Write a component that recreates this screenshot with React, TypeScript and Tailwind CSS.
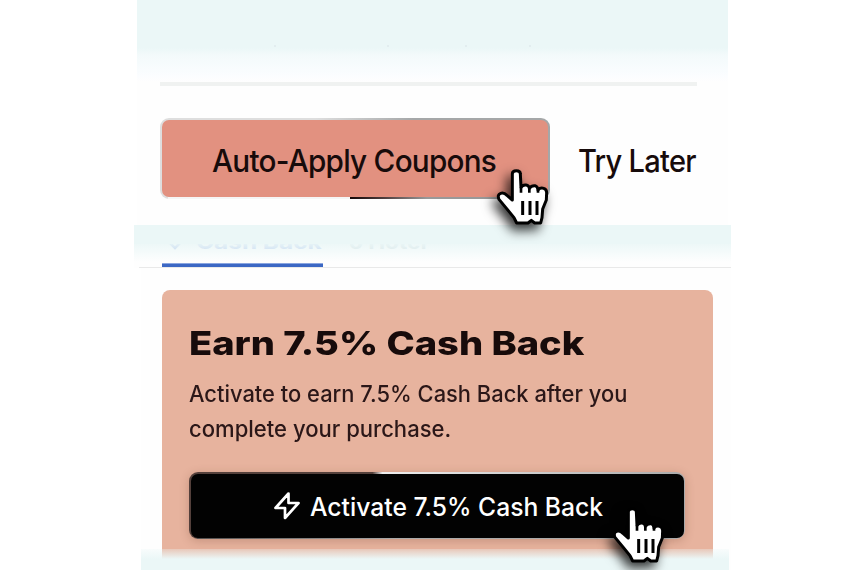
import type { ReactNode } from "react";

function Text({ className, children }: { className: string; children: ReactNode }) {
  return (
    <span className={`block w-max origin-left whitespace-nowrap ${className}`}>{children}</span>
  );
}

function HandCursor({ className }: { className: string }) {
  return (
    <svg
      viewBox="460 170 180 190"
      className={`absolute z-10 h-[63.333px] w-[60px] overflow-visible drop-shadow-[-4px_6px_6px_rgba(0,0,0,0.8)] ${className}`}
    >
      <path
        d="M515 193Q515 184 527 184Q539 184 539 193L541 234Q546 226 556 227Q565 228 566 237Q572 228 583 229Q591 231 592 242Q599 234 609 237Q618 240 618 250L617 272L606 299L604 325L600 341H582L572 333L562 341H528L520 325L498 298L475 270Q469 256 480 252Q490 249 499 258L515 272Z"
        fill="white"
        stroke="black"
        strokeWidth="9"
        strokeLinejoin="round"
      />
      <path d="M541 234V250M566 237V250M592 242V250" stroke="black" strokeWidth="8" fill="none" />
      <path d="M546 275V317M568 275V317M589 275V317" stroke="black" strokeWidth="9" fill="none" />
    </svg>
  );
}

function CouponPanel() {
  return (
    <section className="ml-[137px] flex h-[225px] w-[591px] flex-col bg-[#fefefe]">
      <div className="h-[82px] shrink-0 bg-[linear-gradient(#ebf7f7_0_48px,#f3fafb_55px,#fbfdff_76px,#fefefe_82px)]">
        <div className="ml-[137px] flex gap-[111px] pt-[45px]">
          <i className="size-0.5 rounded-full bg-[#dfeaec]" />
          <i className="size-0.5 rounded-full bg-[#dfeaec]" />
          <i className="-ml-[35px] size-0.5 rounded-full bg-[#dfeaec]" />
          <i className="-ml-[49px] size-0.5 rounded-full bg-[#dfeaec]" />
        </div>
      </div>
      <div className="ml-[23px] h-1 w-[537px] shrink-0 bg-[#f0f2f1]" />
      <div className="mt-8 ml-[23px] flex">
        <button className="relative h-[81px] w-[390px] rounded-[9px] bg-[linear-gradient(90deg,#dedede_0_40%,#a5a7a8_65%)] p-[2px] pl-[1.5px]">
          <span className="flex h-[77px] items-center rounded-[7px] bg-[#e29180] pl-[50px] text-[#170b0b]">
            <Text className="translate-y-[1.5px] scale-x-[0.943] text-[31.5px] font-medium tracking-[-0.8px]">Auto-Apply Coupons</Text>
          </span>
          <i className="absolute bottom-0 left-2 h-[2px] w-[182px] bg-[#f5f5f5]" />
          <i className="absolute bottom-0 left-[190px] h-[2px] w-[192px] bg-[linear-gradient(90deg,#160808,#4f3e3e_18%,#999_40%)]" />
          <HandCursor className="top-[48px] left-[333.6px]" />
        </button>
        <div className="ml-[27.5px] flex h-[81px] items-center text-[#170b0b]">
          <Text className="translate-y-[1.5px] scale-x-[0.923] text-[31.5px] font-medium tracking-[-0.8px]">Try Later</Text>
        </div>
      </div>
    </section>
  );
}

function Tabs() {
  return (
    <nav className="ml-[133.5px] h-[43px] w-[597px] bg-[#fefefe]">
      <div className="relative h-[38px]">
        <div className="flex h-[34px] items-end pb-1 pl-[35px] leading-none font-bold">
          <svg viewBox="0 0 12 12" className="size-3" fill="none" stroke="#a9c0ec" strokeWidth="2.5">
            <path d="m1 0 5 5 5-5" />
          </svg>
          <div className="ml-[15px] w-[126px]">
            <Text className="translate-y-[-3px] scale-x-[1.22] text-[20px] text-[#b3c7ee]">Cash Back</Text>
          </div>
          <div className="ml-[27px]">
            <Text className="translate-y-[-3px] scale-x-[1.19] text-[19px] text-[#d3dfe2]">o Hotel</Text>
          </div>
        </div>
        <div className="absolute inset-x-0 top-0 h-[19px] bg-[#ebf7f7]" />
        <div className="absolute inset-x-0 top-[19px] h-[18px] bg-linear-to-b from-[#ebf7f7]/90 to-[#ebf7f7]/0" />
      </div>
      <div className="relative ml-[28.5px] h-[4px] w-[161px] border-t border-[#8aa5df] bg-[#3c68c4]" />
      <div className="ml-[5px] h-px w-[592px] bg-[#e9e9e9]" />
    </nav>
  );
}

function CashBackCard() {
  return (
    <section className="ml-[141px] h-[302px] w-[590px] bg-[#fefefe] pt-[22px] pl-[21px]">
      <div className="h-[270px] w-[551px] rounded-t-[8px] bg-[#e7b39e] pt-[34px] pl-[27px]">
        <h1 className="h-[38px] text-[#170b0b]">
          <Text className="scale-x-[1.153] text-[33px] leading-[38px] font-extrabold">Earn 7.5% Cash Back</Text>
        </h1>
        <div className="mt-[14px] text-[22.5px] leading-[35px] text-[#2b1718]">
          <Text className="scale-x-[0.973] font-medium">Activate to earn 7.5% Cash Back after you</Text>
          <Text className="scale-x-[0.98] font-medium">complete your purchase.</Text>
        </div>
        <button className="relative mt-[26px] block h-[67px] w-[496px] rounded-[9px] bg-[linear-gradient(90deg,#54403b_0_37%,#eee_39%,#aaa_100%)] p-[1.5px] shadow-[0_2px_10px_rgba(100,50,30,0.25)]">
          <span className="flex h-full items-center rounded-[7px] bg-[#020202] pl-[82px] text-white">
            <svg viewBox="0 0 28 30" className="h-[30px] w-7 shrink-0" fill="none" stroke="currentColor" strokeWidth="2.7" strokeLinejoin="round">
              <path d="M15.5 2.5 2.5 17H12L12 27L25.5 12H15.5Z" />
            </svg>
            <Text className="ml-[9.5px] translate-y-[1.5px] scale-x-[0.968] text-[25.5px] font-medium">Activate 7.5% Cash Back</Text>
          </span>
          <i className="absolute bottom-0 left-2 h-[1.5px] w-[200px] bg-linear-to-r from-[#54504f] to-[#aaa]" />
          <i className="absolute bottom-0 left-[208px] h-[1.5px] w-[280px] bg-[#aaa]" />
          <HandCursor className="top-[31.5px] left-[421.3px]" />
        </button>
      </div>
    </section>
  );
}

export default function App() {
  return (
    <main className="relative h-[570px] w-[864px] overflow-hidden bg-white font-[Inter,sans-serif]">
      <CouponPanel />
      <Tabs />
      <CashBackCard />
      <div className="absolute top-[549px] left-[141px] h-[21px] w-[588px] bg-[linear-gradient(rgba(235,247,247,0.3),#ebf7f7_10px)]" />
    </main>
  );
}
